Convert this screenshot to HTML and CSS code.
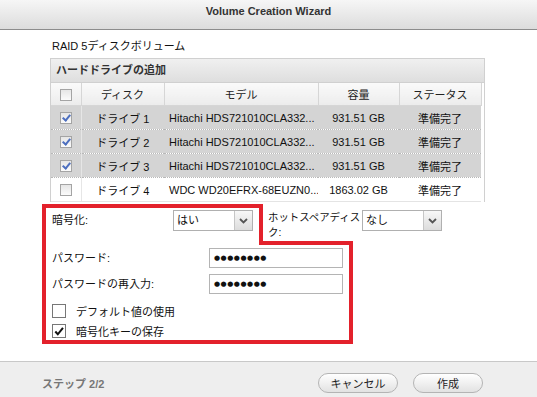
FILE: index.html
```html
<!DOCTYPE html>
<html lang="ja">
<head>
  <meta charset="UTF-8" />
  <title>Volume Creation Wizard</title>
  <link rel="stylesheet" href="styles.css">
</head>
<body>

<div class="wizard">
  <!-- Title bar -->
  <div class="titlebar">Volume Creation Wizard</div>

  <div class="content">
    <div class="volume-type">RAID 5ディスクボリューム</div>

    <!-- Disk list -->
    <div class="disk-panel">
      <div class="panel-head">ハードドライブの追加</div>
      <table class="disks">
        <colgroup>
          <col class="col-cb">
          <col class="col-disk">
          <col class="col-model">
          <col class="col-cap">
          <col class="col-status">
        </colgroup>
        <thead>
          <tr>
            <th><span class="tick"></span></th>
            <th>ディスク</th>
            <th>モデル</th>
            <th>容量</th>
            <th>ステータス</th>
          </tr>
        </thead>
        <tbody>
          <tr class="selected">
            <td class="cb"><span class="tick on"></span></td>
            <td class="center">ドライブ 1</td>
            <td>Hitachi HDS721010CLA332...</td>
            <td class="center">931.51 GB</td>
            <td class="center">準備完了</td>
          </tr>
          <tr class="selected">
            <td class="cb"><span class="tick on"></span></td>
            <td class="center">ドライブ 2</td>
            <td>Hitachi HDS721010CLA332...</td>
            <td class="center">931.51 GB</td>
            <td class="center">準備完了</td>
          </tr>
          <tr class="selected">
            <td class="cb"><span class="tick on"></span></td>
            <td class="center">ドライブ 3</td>
            <td>Hitachi HDS721010CLA332...</td>
            <td class="center">931.51 GB</td>
            <td class="center">準備完了</td>
          </tr>
          <tr>
            <td class="cb"><span class="tick"></span></td>
            <td class="center">ドライブ 4</td>
            <td>WDC WD20EFRX-68EUZN0...</td>
            <td class="center">1863.02 GB</td>
            <td class="center">準備完了</td>
          </tr>
        </tbody>
      </table>
    </div>

    <!-- Encryption options -->
    <div class="options">
      <div class="row-top">
        <span class="label enc-label">暗号化:</span>
        <div class="select">
          <span class="select-value">はい</span>
          <span class="select-btn">
            <svg width="9" height="6" viewBox="0 0 9 6"><path d="M1 1 L4.5 4.5 L8 1" fill="none" stroke="#555" stroke-width="1.8"/></svg>
          </span>
        </div>
        <span class="label spare-label">ホットスペアディスク:</span>
        <div class="select">
          <span class="select-value">なし</span>
          <span class="select-btn">
            <svg width="9" height="6" viewBox="0 0 9 6"><path d="M1 1 L4.5 4.5 L8 1" fill="none" stroke="#555" stroke-width="1.8"/></svg>
          </span>
        </div>
      </div>

      <div class="field">
        <span class="label pw-label">パスワード:</span>
        <div class="input">●●●●●●●●</div>
      </div>
      <div class="field">
        <span class="label pw-label">パスワードの再入力:</span>
        <div class="input">●●●●●●●●</div>
      </div>

      <label class="check first">
        <span class="box"></span>
        デフォルト値の使用
      </label>
      <label class="check">
        <span class="box">
          <svg width="13" height="13" viewBox="0 0 13 13"><path d="M2.5 6.5 L5.2 9.5 L10.8 2.5" fill="none" stroke="#111" stroke-width="2.2"/></svg>
        </span>
        暗号化キーの保存
      </label>
    </div>
  </div>

  <!-- Footer -->
  <div class="footer">
    <span class="step">ステップ 2/2</span>
    <div class="buttons">
      <button class="pill cancel">キャンセル</button>
      <button class="pill create">作成</button>
    </div>
  </div>

  <!-- Red highlight drawn on top of the screenshot -->
  <svg class="highlight" width="537" height="397" viewBox="0 0 537 397">
    <polygon points="44,206 261,206 261,243 351,243 351,342 44,342" fill="none" stroke="#e3212b" stroke-width="4"/>
  </svg>
</div>

</body>
</html>
```

FILE: styles.css
```css
body {
  margin: 0;
  font-family: "Liberation Sans", "Noto Sans CJK JP", sans-serif;
  font-size: 11px;
  color: #111;
  background: #fff;
}

.wizard {
  position: relative;
  width: 537px;
  height: 397px;
  display: flex;
  flex-direction: column;
  overflow: hidden;
}

.titlebar {
  height: 29px;
  line-height: 23px;
  text-align: center;
  font-weight: bold;
  color: #333;
  background: linear-gradient(#f6f6f6, #dcdcdc);
  border-bottom: 1px solid #8c8c8c;
}

.content {
  flex: 1;
  padding: 9px 0 0 50px;
}

.volume-type {
  padding-left: 2px;
  height: 19px;
  line-height: 14px;
}

/* Disk list */
.disk-panel {
  width: 433px;
  border: 1px solid #d0d0d0;
  border-bottom: none;
}

.panel-head {
  height: 23px;
  line-height: 23px;
  padding-left: 5px;
  font-weight: bold;
  color: #333;
  background: linear-gradient(#f0f0f0, #dedede);
  border-bottom: 1px solid #d0d0d0;
}

.disks {
  width: 430px;
  border-collapse: collapse;
  table-layout: fixed;
}

.col-cb { width: 30px; }
.col-disk { width: 83px; }
.col-model { width: 154px; }
.col-cap { width: 81px; }
.col-status { width: 82px; }

.disks th {
  height: 22px;
  font-weight: normal;
  color: #222;
  background: linear-gradient(#fafafa, #ececec);
  border-right: 1px solid #d6d6d6;
  border-bottom: 1px solid #d6d6d6;
  padding: 0;
}

.disks td {
  height: 23px;
  padding: 0 0 0 5px;
  border-bottom: 1px dotted #b8b8b8;
  white-space: nowrap;
  overflow: hidden;
}

.disks tr:last-child td {
  border-bottom: 1px solid #e4e4e4;
}

.disks td.center {
  text-align: center;
  padding: 0;
}

.disks tr.selected td {
  background: #d4d4d4;
}

.disks td.cb {
  padding: 0;
  text-align: center;
  border-right: 1px solid #e6e6e6;
}

.tick {
  display: inline-block;
  width: 10px;
  height: 10px;
  border: 1px solid #a4a4a4;
  background: linear-gradient(#e6e6e6, #fbfbfb);
  vertical-align: middle;
  position: relative;
}

.tick.on::after {
  content: "";
  position: absolute;
  left: 3px;
  top: 0px;
  width: 3px;
  height: 6px;
  border-right: 2px solid #4d6fbf;
  border-bottom: 2px solid #4d6fbf;
  transform: rotate(40deg);
}

/* Options */
.options {
  padding: 8px 0 0 2px;
}

.row-top {
  display: flex;
  align-items: flex-start;
  height: 35px;
}

.label {
  line-height: 16px;
}

.enc-label {
  width: 121px;
  padding-top: 2px;
}

.spare-label {
  width: 94px;
  margin-left: 15px;
  font-size: 10.4px;
  line-height: 15px;
}

.select {
  display: flex;
  width: 78px;
  height: 19px;
  border: 1px solid #b0b0b0;
  background: #fff;
}

.select-value {
  flex: 1;
  padding-left: 3px;
  line-height: 19px;
}

.select-btn {
  width: 17px;
  display: flex;
  align-items: center;
  justify-content: center;
  background: linear-gradient(#f8f8f8, #dcdcdc);
  border-left: 1px solid #c6c6c6;
}

.field {
  display: flex;
  align-items: center;
  height: 26px;
}

.pw-label {
  width: 157px;
}

.input {
  width: 128px;
  height: 18px;
  line-height: 18px;
  padding-left: 4px;
  border: 1px solid #b4b4b4;
  font-family: "DejaVu Sans", sans-serif;
  font-size: 7px;
  letter-spacing: 0.5px;
}

.check {
  display: flex;
  align-items: center;
  gap: 10px;
  height: 20px;
}

.check.first {
  margin-top: 4px;
}

.box {
  width: 12px;
  height: 12px;
  border: 1px solid #777;
  background: #fff;
  display: flex;
  align-items: center;
  justify-content: center;
}

/* Footer */
.footer {
  height: 36px;
  display: flex;
  align-items: flex-start;
  justify-content: space-between;
  padding: 11px 54px 0 42px;
  box-sizing: border-box;
  background: #eeeeee;
  border-top: 1px solid #c8c8c8;
}

.step {
  font-weight: bold;
  color: #777;
  line-height: 22px;
}

.buttons {
  display: flex;
  gap: 15px;
}

.pill {
  height: 20px;
  border: 1px solid #b4b4b4;
  border-radius: 10px;
  background: linear-gradient(#ffffff, #e2e2e2);
  font-family: "Liberation Sans", "Noto Sans CJK JP", sans-serif;
  font-size: 11px;
  color: #222;
  padding: 0;
}

.cancel { width: 80px; }
.create { width: 70px; }

.highlight {
  position: absolute;
  left: 0;
  top: 0;
  pointer-events: none;
}
```
